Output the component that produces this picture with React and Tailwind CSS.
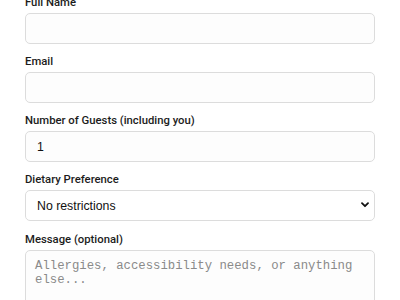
export default function App() {
  const label = "block text-[11.3px] leading-[14px] mb-[3px] font-medium text-[#1c1c1c]";
  const input = "block w-full h-[31px] rounded-[5px] border border-[#dcdcdc] bg-[#fdfdfd] px-[11px] text-[12.3px] text-[#111] outline-none";
  const lf = { fontFamily: 'Roboto, "Liberation Sans", sans-serif' };
  return (
    <div className="w-[400px] h-[300px] overflow-hidden bg-white" style={{ fontFamily: '"Liberation Sans", Arial, sans-serif' }}>
      <form className="px-[25px] mt-[-4.5px] flex flex-col gap-[11.25px]">
        <div>
          <label className={label} style={lf}>Full Name</label>
          <input type="text" className={input} />
        </div>
        <div>
          <label className={label} style={lf}>Email</label>
          <input type="text" className={input} />
        </div>
        <div>
          <label className={label} style={lf}>Number of Guests (including you)</label>
          <input type="text" defaultValue="1" className={input} />
        </div>
        <div>
          <label className={label} style={lf}>Dietary Preference</label>
          <div className="relative">
            <select className={input + " appearance-none bg-white"} defaultValue="none">
              <option value="none">No restrictions</option>
            </select>
            <svg className="absolute right-[6px] top-[12px] pointer-events-none" width="8" height="6" viewBox="0 0 8 6">
              <polyline points="1,1.2 4,4.2 7,1.2" fill="none" stroke="#111" strokeWidth="1.8" strokeLinecap="round" strokeLinejoin="round" />
            </svg>
          </div>
        </div>
        <div>
          <label className={label} style={lf}>Message (optional)</label>
          <textarea
            className="block w-full h-[80px] resize-none rounded-[5px] border border-[#dcdcdc] bg-[#fdfdfd] px-[9px] pt-[8px] text-[12.3px] leading-[14px] text-[#111] outline-none placeholder:text-[#8a8a8a]"
            style={{ fontFamily: '"Liberation Mono", "Courier New", monospace' }}
            placeholder="Allergies, accessibility needs, or anything else..."
          />
        </div>
      </form>
    </div>
  );
}
